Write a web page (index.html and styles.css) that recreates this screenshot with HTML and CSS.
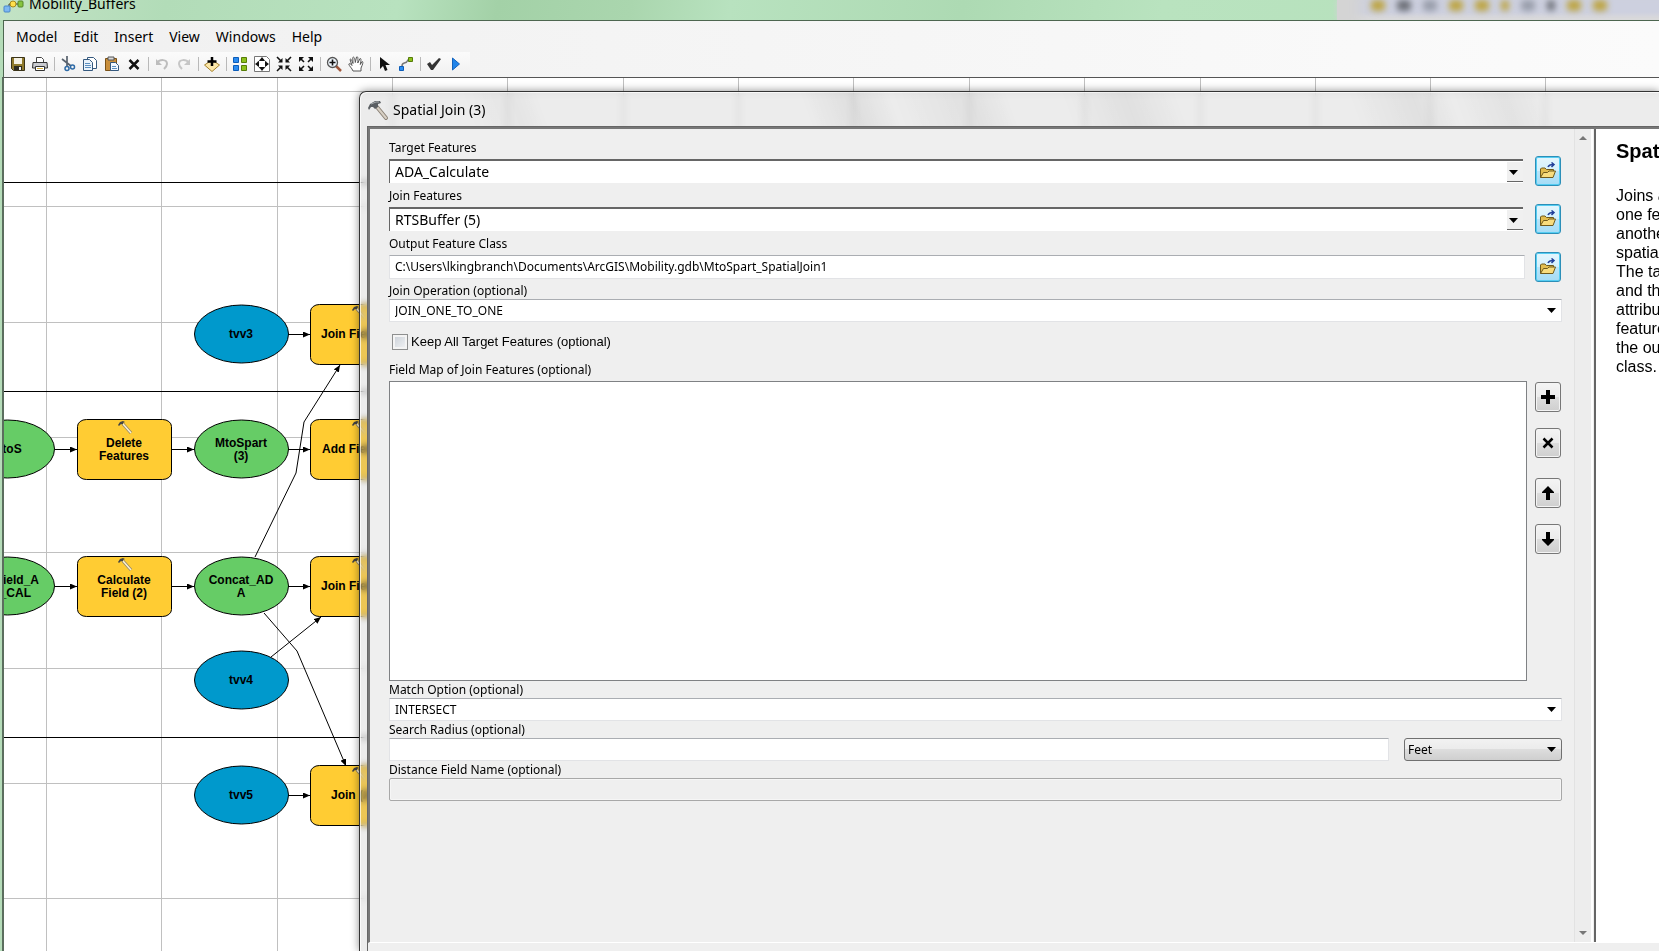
FILE: index.html
```html
<!DOCTYPE html>
<html lang="en">
<head>
<meta charset="utf-8">
<title>Mobility_Buffers</title>
<link rel="stylesheet" href="styles.css">
</head>
<body>
<div class="window">
  <header class="titlebar">
    <svg class="app-icon" width="22" height="20" viewBox="0 0 22 20" aria-hidden="true">
      <path d="M6 13V10H9M13 10h3" fill="none" stroke="#333"/>
      <rect x="1" y="12" width="6" height="6" rx="1" fill="#7db8f2" stroke="#4a86c8"/>
      <circle cx="10" cy="10" r="3" fill="#ffe04d" stroke="#a98a1c"/>
      <rect x="15" y="7" width="5" height="6" rx="1" fill="#86c440" stroke="#55852a"/>
    </svg>
    <h1 class="title">Mobility_Buffers</h1>
    <div class="behind" aria-hidden="true">
      <i class="smudge gold"></i><i class="smudge dark"></i><i class="smudge grey"></i><i class="smudge gold"></i><i class="smudge gold"></i><i class="smudge gold thin"></i><i class="smudge grey"></i><i class="smudge dark thin"></i><i class="smudge gold"></i><i class="smudge gold"></i>
    </div>
  </header>

  <nav class="menubar">
    <button class="menu">Model</button><button class="menu">Edit</button><button class="menu">Insert</button><button class="menu">View</button><button class="menu">Windows</button><button class="menu">Help</button>
  </nav>

  <div class="toolbar" role="toolbar" aria-label="Model tools">
    <button class="tool" aria-label="Save"><svg width="16" height="16" viewBox="0 0 16 16"><path d="M1.500 1.500h13v13h-11l-2-2z" fill="#8f7a2c" stroke="#3a3318"/><path d="M4 2h8v6H4z" fill="#f4f1e4"/><path d="M4 10h8v4H4z" fill="#2c2a20"/><path d="M9 11h2v3H9z" fill="#eee"/></svg></button>
    <button class="tool" aria-label="Print"><svg width="16" height="16" viewBox="0 0 16 16"><path d="M4.500 7V1.500h5l2 2V7" fill="#fff" stroke="#444"/><path d="M1 6.500h14l.5 5.500h-15z" fill="#c9cbd0" stroke="#333"/><path d="M3.500 10.500h9v4h-9z" fill="#fff" stroke="#333"/><path d="M5 12.500h6" stroke="#d6b13a"/></svg></button>
    <span class="sep"></span>
    <button class="tool" aria-label="Cut"><svg width="16" height="16" viewBox="0 0 16 16"><path d="M2 3l9 7M7 0l0 10" stroke="#59636e" stroke-width="1.700" fill="none"/><circle cx="7" cy="12.500" r="2" fill="none" stroke="#2d6aa6" stroke-width="1.500"/><circle cx="12.500" cy="11" r="2" fill="none" stroke="#2d6aa6" stroke-width="1.500"/></svg></button>
    <button class="tool" aria-label="Copy"><svg width="16" height="16" viewBox="0 0 16 16"><path d="M5.500 1.500h6l3 3v8h-9z" fill="#fff" stroke="#35597e"/><path d="M1.500 3.500h6l3 3v8h-9z" fill="#eaf3fb" stroke="#35597e"/><path d="M3 7.500h5M3 9.500h6M3 11.500h6" stroke="#5b8fc0"/></svg></button>
    <button class="tool" aria-label="Paste"><svg width="16" height="16" viewBox="0 0 16 16"><path d="M1.500 2.500h11v12h-11z" fill="#c98f3c" stroke="#7a5218"/><path d="M4 1h6v3H4z" fill="#d9d9d9" stroke="#555"/><path d="M6.500 6.500h5l3 3v5h-8z" fill="#f2f8fe" stroke="#35597e"/><path d="M8 10.500h4M8 12.500h5" stroke="#5b8fc0"/></svg></button>
    <button class="tool" aria-label="Delete"><svg width="16" height="16" viewBox="0 0 16 16"><path d="M3.500 4l9 9M12.500 4l-9 9" stroke="#111" stroke-width="2.500"/></svg></button>
    <span class="sep"></span>
    <button class="tool" aria-label="Undo"><svg width="16" height="16" viewBox="0 0 16 16"><path d="M3 7c3-4 10-4 10 1 0 2-1 3-3 5" fill="none" stroke="#bdbdbd" stroke-width="2"/><path d="M2 3v6h6z" fill="#bdbdbd"/></svg></button>
    <button class="tool" aria-label="Redo"><svg width="16" height="16" viewBox="0 0 16 16"><path d="M13 7C10 3 3 3 3 8c0 2 1 3 3 5" fill="none" stroke="#c6c6c6" stroke-width="2"/><path d="M14 3v6H8z" fill="#c6c6c6"/></svg></button>
    <span class="sep"></span>
    <button class="tool" aria-label="Add data"><svg width="16" height="16" viewBox="0 0 16 16"><path d="M8 4l7.500 5L8 15.500.5 9z" fill="#fbe7a8" stroke="#a5802a"/><path d="M8 1v9M3.500 5.500h9" stroke="#000" stroke-width="2.500"/></svg></button>
    <span class="sep"></span>
    <button class="tool" aria-label="Auto layout"><svg width="16" height="16" viewBox="0 0 16 16"><path d="M1.500 1.500h5v5h-5zM1.500 9.500h5v5h-5z" fill="#2b8cf0" stroke="#0c5cb8"/><path d="M9.500 1.500h5v5h-5zM9.500 9.500h5v5h-5z" fill="#8cc11c" stroke="#567c08"/></svg></button>
    <button class="tool" aria-label="Full extent"><svg width="16" height="16" viewBox="0 0 16 16"><path d="M.5.500h12l3 3v12H.5z" fill="#fff" stroke="#777"/><circle cx="8" cy="8" r="4.500" fill="none" stroke="#555" stroke-dasharray="2 1"/><path d="M8 1l3 4H5zM8 15l3-4H5zM1 8l4-3v6zM15 8l-4-3v6z" fill="#111"/></svg></button>
    <button class="tool" aria-label="Fixed zoom in"><svg width="16" height="16" viewBox="0 0 16 16"><path d="M1 1l4 4M15 1l-4 4M1 15l4-4M15 15l-4-4" stroke="#111" stroke-width="1.600"/><path d="M6.500 2v4.500H2zM9.500 2v4.500H14zM6.500 14V9.500H2zM9.500 14V9.500H14z" fill="#111"/></svg></button>
    <button class="tool" aria-label="Fixed zoom out"><svg width="16" height="16" viewBox="0 0 16 16"><path d="M2 2l4 4M14 2l-4 4M2 14l4-4M14 14l-4-4" stroke="#111" stroke-width="1.600"/><path d="M1 1h5L1 6zM15 1h-5l5 5zM1 15h5l-5-5zM15 15h-5l5-5z" fill="#111"/></svg></button>
    <span class="sep"></span>
    <button class="tool" aria-label="Zoom in"><svg width="16" height="16" viewBox="0 0 16 16"><path d="M10 10l5 5" stroke="#a0583c" stroke-width="2.500"/><circle cx="6.500" cy="6.500" r="5" fill="#eef5fb" stroke="#555" stroke-width="1.300"/><path d="M6.500 3.500v6M3.500 6.500h6" stroke="#111" stroke-width="1.600"/></svg></button>
    <button class="tool" aria-label="Pan"><svg width="16" height="16" viewBox="0 0 16 16"><path d="M5 15C4 12 1 10 .8 8c1-1 2 0 3.200 1.500L2 3.500c1-1 1.500 0 3 4L4.800 1.500c1-1 2 0 2.500 5L8.500 1c1.500-.8 1.500.5 1.300 6L12 2.500c1.500 0 1 1.500.3 6L14 5.500c1.500.2 1 2-1 6.500v3z" fill="#fff" stroke="#555"/></svg></button>
    <span class="sep"></span>
    <button class="tool" aria-label="Select"><svg width="16" height="16" viewBox="0 0 16 16"><path d="M4 1v12l3-3 2 5 2.500-1-2-5H14z" fill="#111"/></svg></button>
    <button class="tool" aria-label="Connect"><svg width="16" height="16" viewBox="0 0 16 16"><path d="M4 10c0-5 4-1 6-6h2" fill="none" stroke="#777" stroke-width="1.500"/><path d="M1.500 10.500h4v4h-4z" fill="#2b8cf0" stroke="#0c5cb8"/><path d="M10.500 1.500h4v4h-4z" fill="#8cc11c" stroke="#567c08"/></svg></button>
    <span class="sep"></span>
    <button class="tool" aria-label="Validate"><svg width="16" height="16" viewBox="0 0 16 16"><path d="M1 8l3-2 2 3 7-7 2 1-8 11H5z" fill="#333"/></svg></button>
    <button class="tool" aria-label="Run"><svg width="16" height="16" viewBox="0 0 16 16"><path d="M4.500 2l7 6-7 6z" fill="#2285ea" stroke="#1464bd"/></svg></button>
  </div>

  <main class="canvas">
    <svg class="diagram" width="100%" height="100%" role="img" aria-label="Model diagram">
      <defs>
        <marker id="tip" viewBox="0 0 7 6" refX="7" refY="3" markerWidth="7" markerHeight="6" markerUnits="userSpaceOnUse" orient="auto"><path d="M0 0l7 3-7 3z"/></marker>
        <g id="hammer"><path d="M0 5l2-3 3-1 2 1-2 1 0 2-2-1-2 2z" fill="#444"/><path d="M5 4l8 9" stroke="#8d8470" stroke-width="3"/><path d="M5 4l8 9" stroke="#fff4d0" stroke-width="1.500"/></g>
        <rect id="tool-node" width="94" height="60" rx="9" ry="7"/>
        <ellipse id="data-node" rx="47" ry="29"/>
      </defs>
      <g transform="translate(-4 -78)">
        <path class="grid" d="M46.500 78V3000M161.500 78V3000M277.500 78V3000M392.500 78V3000M507.500 78V3000M623.500 78V3000M738.500 78V3000M853.500 78V3000M969.500 78V3000M1084.500 78V3000M1200.500 78V3000M1315.500 78V3000M1430.500 78V3000M1545.500 78V3000M0 91.500H3000M0 206.500H3000M0 322.500H3000M0 437.500H3000M0 552.500H3000M0 668.500H3000M0 783.500H3000M0 898.500H3000"/>
        <path class="lane" d="M0 182.500H3000M0 391.500H3000M0 737.500H3000"/>
        <g class="links">
          <path marker-end="url(#tip)" d="M288 334.500h22"/><path marker-end="url(#tip)" d="M55 449.500h22"/><path marker-end="url(#tip)" d="M171 449.500h23"/><path marker-end="url(#tip)" d="M288 449.500h22"/><path marker-end="url(#tip)" d="M55 586.500h22"/><path marker-end="url(#tip)" d="M171 586.500h23"/><path marker-end="url(#tip)" d="M288 586.500h22"/><path marker-end="url(#tip)" d="M288 795.500h22"/>
          <path marker-end="url(#tip)" d="M255 557L296 473 304 422 340 365"/>
          <path marker-end="url(#tip)" d="M264 613L297 651 346 766"/>
          <path marker-end="url(#tip)" d="M271 657L321 617"/>
        </g>
        <g class="blue"><use href="#data-node" x="241.500" y="334"/><use href="#data-node" x="241.500" y="680"/><use href="#data-node" x="241.500" y="795"/></g>
        <g class="green"><use href="#data-node" x="7.500" y="449"/><use href="#data-node" x="241.500" y="449"/><use href="#data-node" x="7.500" y="586"/><use href="#data-node" x="241.500" y="586"/></g>
        <g class="yellow"><use href="#tool-node" x="77.500" y="419.500"/><use href="#tool-node" x="77.500" y="556.500"/><use href="#tool-node" x="310.500" y="304.500"/><use href="#tool-node" x="310.500" y="419.500"/><use href="#tool-node" x="310.500" y="556.500"/><use href="#tool-node" x="310.500" y="765.500"/></g>
        <use href="#hammer" x="118" y="420"/><use href="#hammer" x="118" y="557"/><use href="#hammer" x="352" y="305"/><use href="#hammer" x="352" y="420"/><use href="#hammer" x="352" y="557"/><use href="#hammer" x="352" y="766"/>
        <g class="names">
          <text x="241" y="338">tvv3</text><text x="241" y="684">tvv4</text><text x="241" y="799">tvv5</text>
          <text x="7" y="453">MtoS</text>
          <text x="124" y="447">Delete<tspan x="124" dy="13">Features</tspan></text>
          <text x="241" y="447">MtoSpart<tspan x="241" dy="13">(3)</tspan></text>
          <text x="124" y="584">Calculate<tspan x="124" dy="13">Field (2)</tspan></text>
          <text x="241" y="584">Concat_AD<tspan x="241" dy="13">A</tspan></text>
          <text x="39" y="584" class="end">Field_A<tspan x="31" dy="13">_CAL</tspan></text>
          <text x="321" y="338" class="start">Join Field</text><text x="322" y="453" class="start">Add Field</text><text x="321" y="590" class="start">Join Field</text><text x="331" y="799" class="start">Join (2)</text>
        </g>
      </g>
    </svg>

    <section class="dialog" role="dialog" aria-labelledby="dialog-title">
      <header class="dialog-bar">
        <svg width="22" height="22" viewBox="0 0 22 22" aria-hidden="true"><path d="M10 8l9 11" stroke="#8c8378" stroke-width="4" stroke-linecap="round"/><path d="M10 8l9 11" stroke="#d8d0c4" stroke-width="2" stroke-linecap="round"/><path d="M1 9l2-4 5-3 5 0 1 2-3 1 0 3-3 2-2-2-2 0-2 3z" fill="#5b5f63"/><path d="M4 5l5-2 3 0" stroke="#a8adb0" fill="none"/></svg>
        <h2 class="dialog-title" id="dialog-title">Spatial Join (3)</h2>
      </header>
      <div class="client">
        <div class="panes">
          <form class="form">
            <div class="field">
              <label for="target">Target Features</label>
              <div class="row">
                <div class="pick sunken"><select id="target"><option>ADA_Calculate</option></select><svg class="arrow boxed" width="16" height="20" viewBox="0 0 16 20"><path d="M0 0h16v20H0z" fill="#f0f0f0"/><path d="M0 19.500h16" stroke="#666"/><path d="M2 8h9l-4.500 5z"/></svg></div>
                <button type="button" class="browse" aria-label="Browse target features"><svg width="18" height="18" viewBox="0 0 18 18"><path d="M1.500 15.500V7l1-1h3.500l1.500 1.500h7V10" fill="#e2bd4f" stroke="#6f5a1c"/><path d="M1.500 15.500l3-5h4l1.500-1.500h6.500l-2.500 6.500z" fill="#f8dc7d" stroke="#6f5a1c"/><path d="M9 5c1-2.500 3-2.500 5-2.500M12.500.5l2.500 2-2.500 2.500" stroke="#22409a" stroke-width="1.500" fill="none"/></svg></button>
              </div>
            </div>
            <div class="field">
              <label for="join">Join Features</label>
              <div class="row">
                <div class="pick sunken"><select id="join"><option>RTSBuffer (5)</option></select><svg class="arrow boxed" width="16" height="20" viewBox="0 0 16 20"><path d="M0 0h16v20H0z" fill="#f0f0f0"/><path d="M0 19.500h16" stroke="#666"/><path d="M2 8h9l-4.500 5z"/></svg></div>
                <button type="button" class="browse" aria-label="Browse join features"><svg width="18" height="18" viewBox="0 0 18 18"><path d="M1.500 15.500V7l1-1h3.500l1.500 1.500h7V10" fill="#e2bd4f" stroke="#6f5a1c"/><path d="M1.500 15.500l3-5h4l1.500-1.500h6.500l-2.500 6.500z" fill="#f8dc7d" stroke="#6f5a1c"/><path d="M9 5c1-2.500 3-2.500 5-2.500M12.500.5l2.500 2-2.500 2.500" stroke="#22409a" stroke-width="1.500" fill="none"/></svg></button>
              </div>
            </div>
            <div class="field">
              <label for="output">Output Feature Class</label>
              <div class="row">
                <input class="text" id="output" type="text" value="C:\Users\lkingbranch\Documents\ArcGIS\Mobility.gdb\MtoSpart_SpatialJoin1">
                <button type="button" class="browse" aria-label="Browse output feature class"><svg width="18" height="18" viewBox="0 0 18 18"><path d="M1.500 15.500V7l1-1h3.500l1.500 1.500h7V10" fill="#e2bd4f" stroke="#6f5a1c"/><path d="M1.500 15.500l3-5h4l1.500-1.500h6.500l-2.500 6.500z" fill="#f8dc7d" stroke="#6f5a1c"/><path d="M9 5c1-2.500 3-2.500 5-2.500M12.500.5l2.500 2-2.500 2.500" stroke="#22409a" stroke-width="1.500" fill="none"/></svg></button>
              </div>
            </div>
            <div class="field tight">
              <label for="operation">Join Operation (optional)</label>
              <div class="pick"><select id="operation"><option>JOIN_ONE_TO_ONE</option></select><svg class="arrow" width="9" height="5" viewBox="0 0 9 5"><path d="M0 0h9L4.500 5z"/></svg></div>
            </div>
            <div class="check"><input type="checkbox" id="keep"><label for="keep">Keep All Target Features (optional)</label></div>
            <div class="field tight">
              <label for="fieldmap">Field Map of Join Features (optional)</label>
              <div class="map">
                <select class="list" id="fieldmap" size="10"></select>
                <div class="side">
                  <div class="pair">
                    <button type="button" class="step" aria-label="Add field"><svg width="14" height="14" viewBox="0 0 14 14"><path d="M7 0v14M0 7h14" stroke="#000" stroke-width="4"/></svg></button>
                    <button type="button" class="step" aria-label="Remove field"><svg width="14" height="14" viewBox="0 0 14 14"><path d="M2.500 2.500l9 9M11.500 2.500l-9 9" stroke="#000" stroke-width="2.500"/></svg></button>
                  </div>
                  <div class="pair">
                    <button type="button" class="step" aria-label="Move up"><svg width="14" height="14" viewBox="0 0 14 14"><path d="M7 0l6 6v1H9v7H5V7H1V6z"/></svg></button>
                    <button type="button" class="step" aria-label="Move down"><svg width="14" height="14" viewBox="0 0 14 14"><path d="M7 14l6-6V7H9V0H5v7H1v1z"/></svg></button>
                  </div>
                </div>
              </div>
            </div>
            <div class="field tight">
              <label for="match">Match Option (optional)</label>
              <div class="pick"><select id="match"><option>INTERSECT</option></select><svg class="arrow" width="9" height="5" viewBox="0 0 9 5"><path d="M0 0h9L4.500 5z"/></svg></div>
            </div>
            <div class="field tight">
              <label for="radius">Search Radius (optional)</label>
              <div class="radius">
                <input class="text" id="radius" type="text">
                <div class="pick raised"><select aria-label="Radius unit"><option>Feet</option></select><svg class="arrow" width="9" height="5" viewBox="0 0 9 5"><path d="M0 0h9L4.500 5z"/></svg></div>
              </div>
            </div>
            <div class="field tight">
              <label for="distance">Distance Field Name (optional)</label>
              <input class="text" id="distance" type="text" disabled>
            </div>
          </form>
          <div class="scroll" aria-hidden="true">
            <svg width="8" height="4" viewBox="0 0 8 4"><path d="M4 0l4 4H0z" fill="#777"/></svg>
            <svg width="8" height="4" viewBox="0 0 8 4"><path d="M4 4l4-4H0z" fill="#777"/></svg>
          </div>
          <aside class="help">
            <h3>Spatial Join (3)</h3>
            <p>Joins attributes from<br>one feature to<br>another based on the<br>spatial relationship.<br>The target features<br>and the joined<br>attributes from the join<br>features are written to<br>the output feature<br>class.</p>
          </aside>
        </div>
      </div>
    </section>
  </main>
</div>
</body>
</html>
```
FILE: styles.css
```css
* { box-sizing: border-box; }
body {
  margin: 0;
  font-family: "Noto Sans", "Open Sans", sans-serif;
  font-size: 12px;
  color: #000;
}
button, input, select { font: inherit; color: inherit; margin: 0; }
h1, h2, h3, p { margin: 0; font-weight: 400; }
svg { display: block; flex: none; }

.window { height: 100vh; display: flex; flex-direction: column; overflow: hidden; background: #b5dcb9; }

/* Window frame */
.titlebar {
  height: 20px;
  flex: none;
  display: flex;
  align-items: flex-start;
  overflow: hidden;
  background: linear-gradient(100deg, #c3e3c5 0, #b2dcb8 10%, #b8e2bf 24%, #a3d1a7 30%, #aad6ae 38%, #b8e2bf 44%, #addab3 58%, #b9e3bf 70%, #b5e0bb 100%);
}
.app-icon { margin: -6px 4px 0 3px; }
.title { flex: 1; font-size: 14px; line-height: 20px; margin-top: -6px; }
.behind {
  width: 322px;
  height: 20px;
  padding: 0 52px 0 34px;
  display: flex;
  justify-content: space-between;
  background: linear-gradient(#cdd0df 0, #cdd0df 60%, #d9d9db 90%);
  box-shadow: 0 0 5px #cfd6d2, inset 34px 0 14px -10px #d4d4d4;
}
.smudge { width: 14px; height: 11px; border-radius: 4px; filter: blur(3px); }
.gold { background: #bda544; }
.dark { background: #6d7078; }
.grey { background: #989daa; }
.thin { width: 8px; }

.menubar {
  flex: none;
  height: 32px;
  margin-left: 3px;
  padding: 0 4px;
  display: flex;
  align-items: center;
  border-top: 1px solid #4d6650;
  border-left: 1px solid #4d6650;
  background: linear-gradient(90deg, #f0f0f0, #fbfbfb);
}
.menu { padding: 0 8px; border: 0; background: none; font-size: 14px; line-height: 20px; }

.toolbar {
  flex: none;
  height: 25px;
  margin-left: 3px;
  padding: 0 0 2px 3px;
  display: flex;
  align-items: center;
  border-left: 1px solid #4d6650;
  background: linear-gradient(#fbfbfb, #f0f0f0) 0 0 / 466px 100% no-repeat, linear-gradient(90deg, #f0f0f0, #fbfbfb);
}
.tool { width: 22px; height: 22px; padding: 3px; border: 0; background: none; }
.sep { width: 6px; height: 14px; background: linear-gradient(#b9b9b9, #b9b9b9) center / 1px 100% no-repeat; }

/* Model canvas */
.canvas {
  flex: 1;
  min-height: 0;
  margin-left: 2px;
  position: relative;
  overflow: hidden;
  border-top: 1px solid #555;
  border-left: 2px solid #5b6e5e;
  background: #fff;
}
.diagram { position: absolute; inset: 0; }
.grid { fill: none; stroke: #c0c0c0; shape-rendering: crispEdges; }
.lane { fill: none; stroke: #000; shape-rendering: crispEdges; }
.links { fill: none; stroke: #000; }
.blue { fill: #0099cc; stroke: #000; }
.green { fill: #66cc66; stroke: #000; }
.yellow { fill: #ffcc33; stroke: #000; }
.names { font: bold 12px "Liberation Sans", Arial, sans-serif; text-anchor: middle; }
.names .start { text-anchor: start; }
.names .end { text-anchor: end; }

/* Tool dialog, floating over the canvas */
.dialog {
  position: absolute;
  top: 13px;
  left: 355px;
  right: 0;
  bottom: 0;
  display: flex;
  flex-direction: column;
  padding-left: 7px;
  border-top: 1px solid #333;
  border-left: 1px solid #333;
  border-top-left-radius: 7px;
  background: rgba(180, 180, 180, 0.26);
  backdrop-filter: blur(3px);
  box-shadow: inset 1px 1px 0 rgba(255, 255, 255, 0.7), 0 0 8px rgba(0, 0, 0, 0.45);
}
.dialog-bar {
  flex: none;
  height: 34px;
  padding-top: 1px;
  display: flex;
  align-items: center;
  gap: 4px;
  background: linear-gradient(70deg, transparent 0, transparent 8%, rgba(0, 0, 0, 0.03) 12%, transparent 14%, transparent 34%, rgba(0, 0, 0, 0.06) 38%, transparent 41%, rgba(0, 0, 0, 0.05) 47%, transparent 50%, transparent 54%, rgba(0, 0, 0, 0.05) 59%, transparent 63%, transparent 76%, rgba(0, 0, 0, 0.05) 81%, transparent 84%, rgba(0, 0, 0, 0.04) 88%, transparent 91%);
}
.dialog-title { font-size: 14px; line-height: 20px; }
.client {
  flex: 1;
  min-height: 0;
  padding-bottom: 8px;
  display: flex;
  border-top: 1px solid #666;
  border-left: 1px solid #666;
  background: #efefef;
}
.panes {
  flex: 1;
  min-width: 0;
  display: flex;
  border-top: 2px solid #777;
  border-left: 2px solid #777;
  border-bottom: 1px solid #fff;
}

.form { flex: 1; min-width: 0; padding: 9px 12px 0 19px; }
.field { display: flex; flex-direction: column; }
.field > label { padding-top: 2px; line-height: 16px; white-space: nowrap; }
.field.tight > label { padding-top: 0; line-height: 17px; }
.row { display: flex; align-items: center; gap: 10px; height: 30px; padding-right: 1px; }
.text {
  flex: 1;
  min-width: 0;
  height: 23px;
  padding: 0 5px;
  border: 1px solid #e2e3e6;
  border-top-color: #aaadb2;
  background: #fff;
}
.row > .text { height: 24px; padding-bottom: 2px; }
.field > .text { flex: none; width: 100%; }
.text:disabled { border-color: #a8a8a8; border-radius: 2px; background: #efefef; box-shadow: inset 0 0 0 1px #f6f6f6; }

.pick { display: grid; align-items: center; height: 23px; border: 1px solid #e2e3e6; border-top-color: #aaadb2; background: #fff; }
.pick select {
  grid-area: 1 / 1;
  width: 100%;
  height: 100%;
  padding: 0 5px;
  border: 0;
  appearance: none;
  background: none;
}
.arrow { grid-area: 1 / 1; justify-self: end; margin-right: 5px; pointer-events: none; }
.arrow.boxed { margin-right: 0; }
.sunken { flex: 1; height: 24px; margin-right: 2px; border: 0; border-top: 2px solid #666; border-left: 1px solid #666; }
.sunken select { padding-bottom: 2px; font-size: 14px; }
.raised {
  width: 158px;
  border: 1px solid #707070;
  border-radius: 3px;
  background: linear-gradient(#f2f2f2 0, #ebebeb 50%, #dddddd 50%, #cfcfcf 100%);
}
.raised select { padding: 0 3px; }
.radius { display: flex; gap: 15px; height: 23px; }

.browse {
  width: 26px;
  height: 30px;
  padding: 0;
  display: grid;
  place-items: center;
  border: 1px solid #2c8fb8;
  border-radius: 3px;
  background: linear-gradient(#e4f6fd 0, #d3f0fc 50%, #b9e5f9 50%, #a5dcf6 100%);
  box-shadow: inset 0 0 0 1px #55cdf2;
}
.check {
  display: flex;
  align-items: center;
  gap: 3px;
  height: 39px;
  padding-left: 3px;
  font: 13px "Liberation Sans", Arial, sans-serif;
}
.check input {
  appearance: none;
  width: 16px;
  height: 16px;
  border: 1px solid #8e8f8f;
  background: linear-gradient(135deg, #c8ced6, #f4f5f6);
  box-shadow: inset 0 0 0 2px #f4f4f4;
}
.map { display: flex; gap: 8px; margin-top: 3px; padding-right: 1px; }
.list { flex: 1; min-width: 0; height: 300px; border: 1px solid #7f8184; border-radius: 0; background: #fff; }
.side { display: flex; flex-direction: column; gap: 20px; padding-top: 1px; }
.pair { display: flex; flex-direction: column; gap: 16px; }
.step {
  width: 26px;
  height: 30px;
  padding: 0;
  display: grid;
  place-items: center;
  border: 1px solid #777;
  border-radius: 3px;
  background: linear-gradient(#f4f4f4 0, #ebebeb 50%, #dddddd 50%, #cfcfcf 100%);
  box-shadow: inset 0 0 0 1px #f4f4f4;
}

.scroll {
  width: 17px;
  margin-right: 3px;
  padding: 7px 0;
  display: flex;
  flex-direction: column;
  align-items: center;
  justify-content: space-between;
  border-left: 1px solid #e2e2e2;
  background: #ededed;
  box-shadow: 2px 0 0 #fff;
}
.help {
  width: 65px;
  padding: 10px 0 0 20px;
  overflow: hidden;
  white-space: nowrap;
  border-left: 2px solid #666;
  background: #fff;
  font: 16px/19px "Liberation Sans", Arial, sans-serif;
}
.help h3 { margin-bottom: 23px; font-size: 20px; line-height: 24px; font-weight: 700; }
```
